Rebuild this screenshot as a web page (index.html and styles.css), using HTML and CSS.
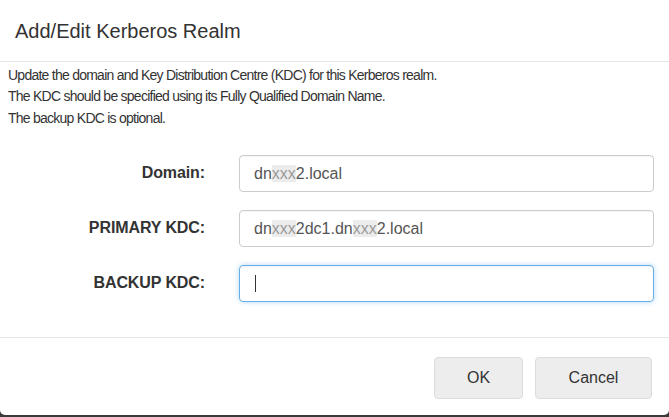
FILE: index.html
```html
<!DOCTYPE html>
<html lang="en">
  <head>
    <meta charset="UTF-8" />
    <meta name="viewport" content="width=device-width, initial-scale=1.0" />
    <title>Add/Edit Kerberos Realm</title>
    <link rel="stylesheet" href="styles.css">
  </head>
  <body>
    <div class="modal">
      <div class="modal__header">
        <h4 class="modal__title">Add/Edit Kerberos Realm</h4>
      </div>
      <div class="modal__body">
        <p class="modal__desc">
          Update the domain and Key Distribution Centre (KDC) for this Kerberos realm.<br />
          The KDC should be specified using its Fully Qualified Domain Name.<br />
          The backup KDC is optional.
        </p>
        <form class="form">
          <div class="form__row">
            <label class="form__label">Domain:</label>
            <div class="form__input">dn<span class="redact">xxx</span>2.local</div>
          </div>
          <div class="form__row">
            <label class="form__label">PRIMARY KDC:</label>
            <div class="form__input">dn<span class="redact">xxx</span>2dc1.dn<span class="redact">xxx</span>2.local</div>
          </div>
          <div class="form__row">
            <label class="form__label">BACKUP KDC:</label>
            <div class="form__input form__input--focus"><span class="caret"></span></div>
          </div>
        </form>
      </div>
      <div class="modal__footer">
        <button class="btn btn--ok">OK</button>
        <button class="btn btn--cancel">Cancel</button>
      </div>
    </div>
  </body>
</html>
```

FILE: styles.css
```css
* {
  margin: 0;
  padding: 0;
  box-sizing: border-box;
}

body {
  font-family: "Liberation Sans", Arial, sans-serif;
  color: #333;
  background-color: #3a3a3a;
  width: 669px;
  height: 417px;
  overflow: hidden;
}

.modal {
  background-color: #fff;
  height: 415px;
  border-radius: 0 0 5px 5px;
  display: flex;
  flex-direction: column;
}

.modal__header {
  height: 62px;
  padding: 19px 15px 0;
  border-bottom: 1px solid #e5e5e5;
}

.modal__title {
  font-size: 20px;
  font-weight: normal;
  line-height: 24px;
}

.modal__body {
  padding: 3px 15px 0 8px;
  height: 276px;
  border-bottom: 1px solid #e5e5e5;
}

.modal__desc {
  font-size: 14px;
  line-height: 21.3px;
  letter-spacing: -0.75px;
}

.form {
  margin-top: 26px;
  display: flex;
  flex-direction: column;
  gap: 18px;
}

.form__row {
  display: flex;
  align-items: center;
}

.form__label {
  width: 197px;
  text-align: right;
  font-size: 16px;
  font-weight: bold;
  margin-right: 34px;
  letter-spacing: -0.1px;
}

.form__input {
  width: 415px;
  height: 37px;
  border: 1px solid #ccc;
  border-radius: 4px;
  padding: 0 14px;
  font-size: 16px;
  line-height: 35px;
  color: #555;
  box-shadow: inset 0 1px 1px rgba(0, 0, 0, 0.04);
}

.form__input--focus {
  border-color: #66afe9;
  box-shadow: inset 0 1px 1px rgba(0, 0, 0, 0.05), 0 0 5px rgba(102, 175, 233, 0.5);
  display: flex;
  align-items: center;
}

.redact {
  background-color: #ececec;
  color: #9a9a9a;
}

.caret {
  display: inline-block;
  width: 1px;
  height: 17px;
  margin-left: 1px;
  background-color: #333;
}

.modal__footer {
  flex: 1;
  display: flex;
  justify-content: flex-end;
  align-items: flex-start;
  padding: 19px 17px 0 0;
  gap: 12px;
}

.btn {
  font-family: inherit;
  font-size: 16px;
  color: #333;
  background-color: #ededed;
  border: 1px solid #dcdcdc;
  border-radius: 4px;
  height: 42px;
  cursor: pointer;
}

.btn--ok {
  width: 89px;
}

.btn--cancel {
  width: 117px;
}
```
